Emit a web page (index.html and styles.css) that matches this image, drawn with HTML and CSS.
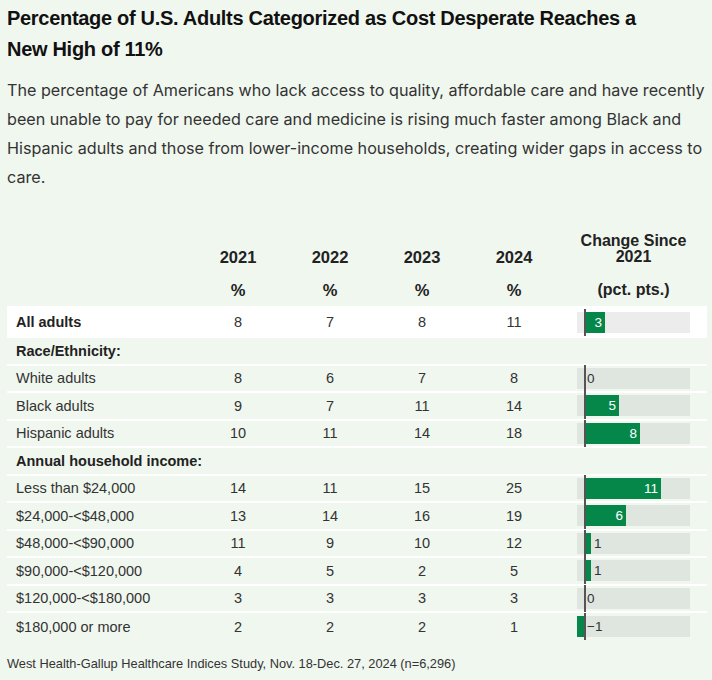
FILE: index.html
```html
<!DOCTYPE html>
<html lang="en">
<head>
<meta charset="utf-8">
<title>Cost Desperate</title>
<link rel="stylesheet" href="styles.css">
</head>
<body>
<div class="page">
  <h1 class="title">Percentage of U.S. Adults Categorized as Cost Desperate Reaches a New High of 11%</h1>
  <p class="sub">The percentage of Americans who lack access to quality, affordable care and have recently been unable to pay for needed care and medicine is rising much faster among Black and Hispanic adults and those from lower-income households, creating wider gaps in access to care.</p>

  <div class="table">
    <div class="hrow hrow1">
      <div></div>
      <div class="hc">2021</div>
      <div class="hc">2022</div>
      <div class="hc">2023</div>
      <div class="hc">2024</div>
      <div class="hc hchg">Change Since<br>2021</div>
    </div>
    <div class="hrow hrow2">
      <div></div>
      <div class="hc">%</div>
      <div class="hc">%</div>
      <div class="hc">%</div>
      <div class="hc">%</div>
      <div class="hc hchg">(pct. pts.)</div>
    </div>

    <div class="row total">
      <div class="lbl b">All adults</div>
      <div class="v">8</div><div class="v">7</div><div class="v">8</div><div class="v">11</div>
      <div class="chg"><div class="track"><span class="bar" style="left:7px;width:21px"><span class="in">3</span></span><span class="zero"></span></div></div>
    </div>

    <div class="row group">
      <div class="lbl b">Race/Ethnicity:</div>
    </div>

    <div class="row">
      <div class="lbl">White adults</div>
      <div class="v">8</div><div class="v">6</div><div class="v">7</div><div class="v">8</div>
      <div class="chg"><div class="track"><span class="out" style="left:10px">0</span><span class="zero"></span></div></div>
    </div>
    <div class="row">
      <div class="lbl">Black adults</div>
      <div class="v">9</div><div class="v">7</div><div class="v">11</div><div class="v">14</div>
      <div class="chg"><div class="track"><span class="bar" style="left:7px;width:35px"><span class="in">5</span></span><span class="zero"></span></div></div>
    </div>
    <div class="row">
      <div class="lbl">Hispanic adults</div>
      <div class="v">10</div><div class="v">11</div><div class="v">14</div><div class="v">18</div>
      <div class="chg"><div class="track"><span class="bar" style="left:7px;width:56px"><span class="in">8</span></span><span class="zero"></span></div></div>
    </div>

    <div class="row group">
      <div class="lbl b">Annual household income:</div>
    </div>

    <div class="row">
      <div class="lbl">Less than $24,000</div>
      <div class="v">14</div><div class="v">11</div><div class="v">15</div><div class="v">25</div>
      <div class="chg"><div class="track"><span class="bar" style="left:7px;width:77px"><span class="in">11</span></span><span class="zero"></span></div></div>
    </div>
    <div class="row">
      <div class="lbl">$24,000-&lt;$48,000</div>
      <div class="v">13</div><div class="v">14</div><div class="v">16</div><div class="v">19</div>
      <div class="chg"><div class="track"><span class="bar" style="left:7px;width:42px"><span class="in">6</span></span><span class="zero"></span></div></div>
    </div>
    <div class="row">
      <div class="lbl">$48,000-&lt;$90,000</div>
      <div class="v">11</div><div class="v">9</div><div class="v">10</div><div class="v">12</div>
      <div class="chg"><div class="track"><span class="bar" style="left:7px;width:7px"></span><span class="out" style="left:17px">1</span><span class="zero"></span></div></div>
    </div>
    <div class="row">
      <div class="lbl">$90,000-&lt;$120,000</div>
      <div class="v">4</div><div class="v">5</div><div class="v">2</div><div class="v">5</div>
      <div class="chg"><div class="track"><span class="bar" style="left:7px;width:7px"></span><span class="out" style="left:17px">1</span><span class="zero"></span></div></div>
    </div>
    <div class="row">
      <div class="lbl">$120,000-&lt;$180,000</div>
      <div class="v">3</div><div class="v">3</div><div class="v">3</div><div class="v">3</div>
      <div class="chg"><div class="track"><span class="out" style="left:10px">0</span><span class="zero"></span></div></div>
    </div>
    <div class="row last">
      <div class="lbl">$180,000 or more</div>
      <div class="v">2</div><div class="v">2</div><div class="v">2</div><div class="v">1</div>
      <div class="chg"><div class="track"><span class="bar" style="left:0;width:7px"></span><span class="out" style="left:10px">&minus;1</span><span class="zero"></span></div></div>
    </div>
  </div>

  <p class="source">West Health-Gallup Healthcare Indices Study, Nov. 18-Dec. 27, 2024 (n=6,296)</p>
</div>
</body>
</html>
```

FILE: styles.css
```css
html, body {
  margin: 0;
  padding: 0;
  background: #f0f7ef;
}

.page {
  padding: 3px 5px 0 7px;
  font-family: "Liberation Sans", Arial, sans-serif;
  color: #333;
}

.title {
  margin: 0;
  max-width: 660px;
  font-size: 20px;
  line-height: 31px;
  font-weight: bold;
  letter-spacing: -0.3px;
  color: #111;
}

.sub {
  margin: 10.5px 0 0;
  font-family: Inter, "Liberation Sans", sans-serif;
  font-size: 16.15px;
  line-height: 29px;
  color: #333;
}

.table {
  margin-top: 41.5px;
  width: 700px;
}

.hrow,
.row {
  display: grid;
  grid-template-columns: 185px 92px 92px 92px 92px 147px;
}

.hrow1 {
  align-items: end;
  padding-bottom: 9px;
}

.hrow2 {
  height: 32px;
  align-items: center;
}

.hc {
  text-align: center;
  font-weight: bold;
  color: #222;
  font-size: 16.5px;
  line-height: 16px;
}

.hchg {
  font-size: 16px;
}

.row {
  height: 27.5px;
  box-sizing: border-box;
  border-bottom: 2px solid #fff;
  align-items: center;
  font-size: 14.5px;
}

.row.total {
  height: 32px;
  background: #fff;
  border-bottom: 0;
}

.row.last {
  border-bottom: 0;
}

.lbl {
  padding-left: 9px;
  white-space: nowrap;
}

.lbl.b {
  font-weight: bold;
  color: #222;
}

.group .lbl {
  grid-column: 1 / -1;
}

.v {
  text-align: center;
}

.chg {
  padding-left: 17px;
  display: flex;
  align-items: center;
}

.track {
  position: relative;
  width: 113px;
  height: 21px;
  background: #dfe5df;
}

.total .track {
  background: #ececec;
}

.bar {
  position: absolute;
  top: 0;
  bottom: 0;
  background: #06874a;
  display: flex;
  align-items: center;
  justify-content: flex-end;
}

.in {
  padding-right: 3px;
  color: #fff;
  font-size: 13.5px;
  line-height: 21px;
}

.out {
  position: absolute;
  top: 0;
  line-height: 21px;
  font-size: 13.5px;
  color: #333;
}

.zero {
  position: absolute;
  left: 7px;
  top: -3px;
  bottom: -3px;
  width: 1.5px;
  background: #555;
}

.source {
  margin: 15.5px 0 0;
  font-size: 12.8px;
  line-height: 16px;
  color: #333;
}
```
